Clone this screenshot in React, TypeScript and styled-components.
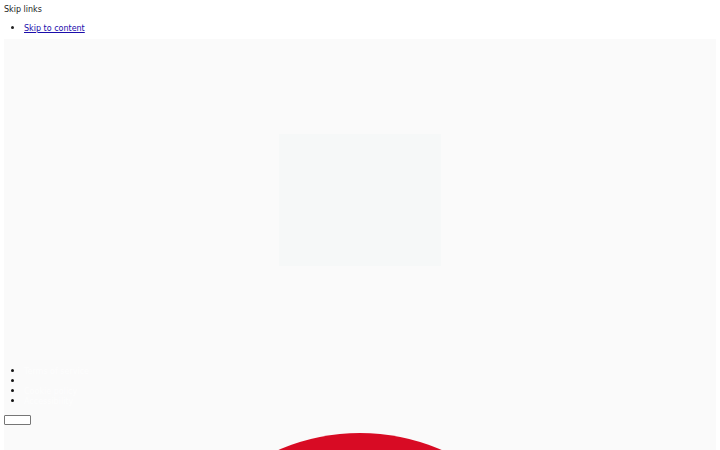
import * as React from "react";
import styled, { createGlobalStyle } from "styled-components";

const GlobalStyle = createGlobalStyle`
  html, body {
    margin: 0;
    padding: 0;
    background: #ffffff;
  }
  body {
    margin: 4px;
    font-family: "DejaVu Sans", sans-serif;
    font-size: 8px;
    line-height: 10px;
    color: #222222;
    overflow: hidden;
  }
  li::marker {
    font-size: 10px;
  }
`;

const SkipLabel = styled.div`
  padding-top: 1px;
  height: 10px;
`;

const LinkList = styled.ul`
  margin: 8px 0 5px;
  padding-left: 20px;
  list-style: disc;
`;

const SkipLink = styled.a`
  color: #1a0dab;
  text-decoration: underline;
`;

const Stage = styled.main`
  background: #fafafa;
  padding-top: 95px;
  display: flex;
  flex-direction: column;
  min-height: 500px;
`;

const Placeholder = styled.div`
  align-self: center;
  width: 162px;
  height: 132px;
  background: #f6f8f8;
`;

const NavList = styled.ul`
  margin: 100px 0 0;
  padding-left: 20px;
  list-style: disc;
  color: #111111;
`;

const NavItem = styled.li`
  height: 10px;
  span {
    color: #fdfdfd;
  }
`;

const MenuButton = styled.button`
  margin-top: 9px;
  width: 27px;
  height: 10px;
  padding: 0;
  border: 1px solid #767676;
  background: #ffffff;
  border-radius: 1px;
`;

const Disc = styled.div`
  align-self: center;
  margin-top: 6px;
  width: 412px;
  height: 412px;
  border-radius: 50%;
  background: #d80b24;
  flex-shrink: 0;
`;

const navItems = ["Terms of service", "", "Cookie policy", "Accessibility"];

export default function App() {
  return (
    <>
      <GlobalStyle />
      <SkipLabel>Skip links</SkipLabel>
      <LinkList>
        <li>
          <SkipLink href="#content">Skip to content</SkipLink>
        </li>
      </LinkList>
      <Stage id="content">
        <Placeholder />
        <NavList>
          {navItems.map((label, i) => (
            <NavItem key={i}>
              <span>{label}</span>
            </NavItem>
          ))}
        </NavList>
        <div>
          <MenuButton aria-label="Menu" />
        </div>
        <Disc />
      </Stage>
    </>
  );
}
